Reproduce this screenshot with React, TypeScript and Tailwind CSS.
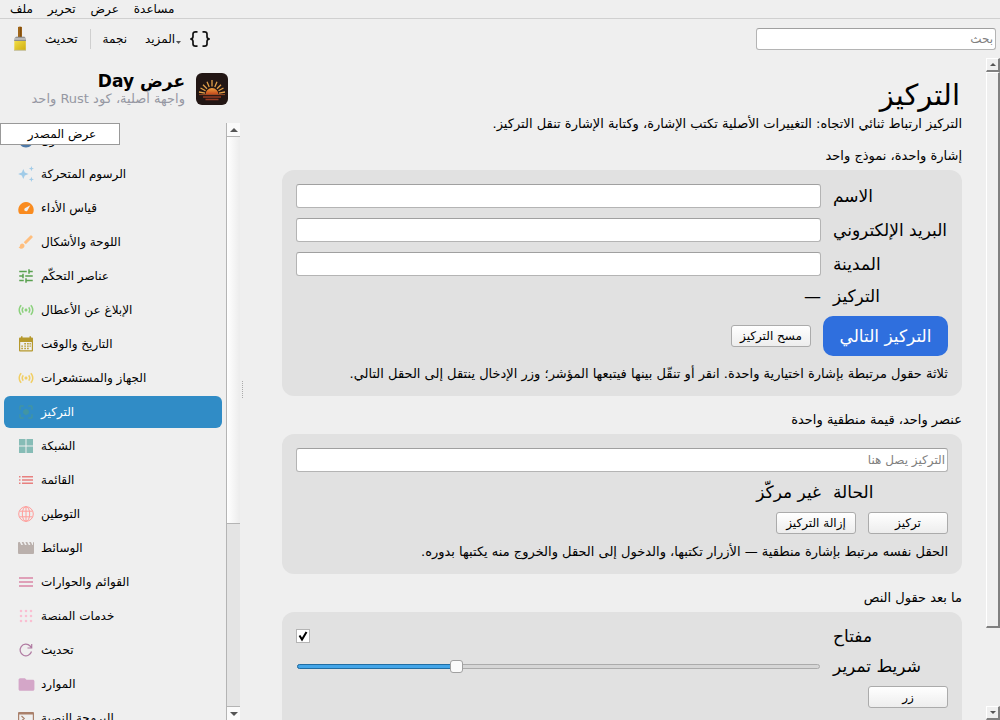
import { useState } from "react";
import type { ReactNode } from "react";
import clsx from "clsx";
import { MdBrush, MdCenterFocusStrong, MdFolder, MdInfo, MdSensors, MdTune } from "react-icons/md";

type Item = { label: string; color: string; icon: ReactNode };

function Glyph({ children }: { children: ReactNode }) {
  return (
    <svg viewBox="0 0 16 16" className="size-4 shrink-0" fill="currentColor" aria-hidden="true">
      {children}
    </svg>
  );
}

const items: Item[] = [
  { label: "حول", color: "text-[#4e79a7]", icon: <MdInfo className="size-[18px] shrink-0" /> },
  {
    label: "الرسوم المتحركة",
    color: "text-[#a0cbe8]",
    icon: (
      <Glyph>
        <path d="M5.300 3l1.500 3.500L10.500 8 6.800 9.500 5.300 13 3.800 9.500.1 8l3.700-1.500zM13.400 0l.7 1.900 1.900.7-1.900.7-.7 1.900-.7-1.900-1.900-.7 1.900-.7zM13.400 10.800l.7 1.900 1.900.7-1.900.7-.7 1.900-.7-1.900-1.900-.7 1.900-.7z" />
      </Glyph>
    ),
  },
  {
    label: "قياس الأداء",
    color: "text-[#f98b1f]",
    icon: (
      <Glyph>
        <path
          fillRule="evenodd"
          d="M8 2a7.900 7.900 0 0 0-7 11.200c.3.6.7.8 1.200.8h11.600c.5 0 .9-.2 1.200-.8A7.900 7.900 0 0 0 8 2zm4.300 3.200L9.600 10.300a1.700 1.700 0 1 1-2.300-2.200z"
        />
      </Glyph>
    ),
  },
  { label: "اللوحة والأشكال", color: "text-[#ffbe7d]", icon: <MdBrush className="size-[18px] shrink-0" /> },
  { label: "عناصر التحكّم", color: "text-[#59a14f]", icon: <MdTune className="size-[18px] shrink-0" /> },
  { label: "الإبلاغ عن الأعطال", color: "text-[#8cd17d]", icon: <MdSensors className="size-[18px] shrink-0" /> },
  {
    label: "التاريخ والوقت",
    color: "text-[#b6992d]",
    icon: (
      <Glyph>
        <path
          fillRule="evenodd"
          d="M3 .2h1.500V1.500h7V.2H13v1.300h1a1 1 0 0 1 1 1V14.500a1 1 0 0 1-1 1H2a1 1 0 0 1-1-1v-12a1 1 0 0 1 1-1h1zM2.200 6v8.300h11.600V6z"
        />
        <path
          d="M6.300 7.700h1.600M9.100 7.700h1.600M11.500 7.700h1.300M3.300 10.100h1.600M6.300 10.100h1.600M9.100 10.100h1.600M11.500 10.100h1.300M3.300 12.500h1.600M6.300 12.500h1.600M9.100 12.500h1.600"
          stroke="currentColor"
          strokeWidth="1.400"
        />
      </Glyph>
    ),
  },
  { label: "الجهاز والمستشعرات", color: "text-[#f1ce63]", icon: <MdSensors className="size-[18px] shrink-0" /> },
  {
    label: "التركيز",
    color: "text-[#499894]/70",
    icon: <MdCenterFocusStrong className="size-[18px] shrink-0" />,
  },
  {
    label: "الشبكة",
    color: "text-[#86bcb6]",
    icon: (
      <Glyph>
        <path d="M1 1h6.500v6.500H1zM8.500 1H15v6.500H8.500zM1 8.500h6.500V15H1zM8.500 8.500H15V15H8.500z" />
      </Glyph>
    ),
  },
  {
    label: "القائمة",
    color: "text-[#e8807f]",
    icon: (
      <Glyph>
        <path d="M1 4h1.500v1.500H1zM4 4h11v1.500H4zM1 7.300h1.500v1.500H1zM4 7.300h11v1.500H4zM1 10.600h1.500v1.500H1zM4 10.600h11v1.500H4z" />
      </Glyph>
    ),
  },
  {
    label: "التوطين",
    color: "text-[#ff9d9a]",
    icon: (
      <Glyph>
        <g fill="none" stroke="currentColor">
          <circle cx="8" cy="8" r="7.300" />
          <ellipse cx="8" cy="8" rx="3.700" ry="7.300" />
          <path d="M8 .7v14.600M1.500 5.200h13M1.500 10.800h13" />
        </g>
      </Glyph>
    ),
  },
  {
    label: "الوسائط",
    color: "text-[#bab0ac]",
    icon: (
      <Glyph>
        <path d="M0 3a1 1 0 0 1 1-1h.8l1.500 3h1.700L3.700 2h1.800L7 5h1.700L7.400 2h1.800l1.500 3h1.700L11.100 2h1.800l1.500 3h.6V2a1 1 0 0 1 1 1v10a1 1 0 0 1-1 1H1a1 1 0 0 1-1-1z" />
      </Glyph>
    ),
  },
  {
    label: "القوائم والحوارات",
    color: "text-[#dfa0b8]",
    icon: (
      <Glyph>
        <path d="M1 3h14v2H1zM1 7h14v2H1zM1 11h14v2H1z" />
      </Glyph>
    ),
  },
  {
    label: "خدمات المنصة",
    color: "text-[#fabfd2]",
    icon: (
      <Glyph>
        <path
          d="M3 3h.01M8 3h.01M13 3h.01M3 8h.01M8 8h.01M13 8h.01M3 13h.01M8 13h.01M13 13h.01"
          stroke="currentColor"
          strokeWidth="2.600"
          strokeLinecap="round"
        />
      </Glyph>
    ),
  },
  {
    label: "تحديث",
    color: "text-[#b07aa1]",
    icon: (
      <Glyph>
        <path
          d="M13.500 9.500A5.800 5.800 0 1 1 12.100 4l1.400 1.500M13.700 2v4H9.500"
          fill="none"
          stroke="currentColor"
          strokeWidth="1.200"
        />
      </Glyph>
    ),
  },
  { label: "الموارد", color: "text-[#d4a6c8]", icon: <MdFolder className="size-[19px] shrink-0" /> },
  {
    label: "البرمجة النصية",
    color: "text-[#a9806b]",
    icon: (
      <Glyph>
        <path
          fillRule="evenodd"
          d="M1 2h14a1 1 0 0 1 1 1v11a1 1 0 0 1-1 1H1a1 1 0 0 1-1-1V3a1 1 0 0 1 1-1zm.2 2.500v9.200h13.600V4.500z"
        />
        <path d="M3.500 6l2.700 2.500L3.500 11M8 12h4" fill="none" stroke="currentColor" strokeWidth="1.200" />
      </Glyph>
    ),
  },
];

const menus = ["ملف", "تحرير", "عرض", "مساعدة"];

const inputClass =
  "w-full min-w-0 rounded-[3px] border border-[#b4b4b4] border-t-[#a0a0a0] bg-white px-0.5 text-xs text-black outline-none placeholder:text-[#808080]";

function Arrow({ up, className = "h-1 w-2" }: { up?: boolean; className?: string }) {
  return (
    <svg viewBox="0 0 8 4" className={className} fill="currentColor" preserveAspectRatio="none" aria-hidden="true">
      <path d={up ? "M0 4L4 0l4 4z" : "M0 0h8L4 4z"} />
    </svg>
  );
}

function BrushIcon() {
  return (
    <svg viewBox="0 0 16 26" className="h-[26px] w-4" aria-hidden="true">
      <defs>
        <linearGradient id="bristle" x1="0" y1="0" x2="1" y2="1">
          <stop offset="0" stopColor="#f4e04a" />
          <stop offset="1" stopColor="#cfae10" />
        </linearGradient>
        <linearGradient id="ferrule" x1="0" y1="0" x2="0" y2="1">
          <stop offset="0" stopColor="#777" />
          <stop offset="0.500" stopColor="#ccc" />
          <stop offset="1" stopColor="#777" />
        </linearGradient>
      </defs>
      <path d="M6 1Q8-.2 10 1v10.500H6z" fill="#a0661a" />
      <path d="M8.700 1V11" stroke="#7d4b0c" />
      <path d="M2.300 14v10h11.500V14z" fill="url(#bristle)" />
      <path d="M4 10.800h8.500L14 12.500V15H2.200v-2.500z" fill="url(#ferrule)" />
      <path d="M2 24.300h12" stroke="#c3bd94" />
    </svg>
  );
}

function Logo() {
  return (
    <svg viewBox="0 0 32 32" className="size-8 shrink-0" aria-hidden="true">
      <defs>
        <linearGradient id="sun" x1="0" y1="0" x2="0" y2="1">
          <stop offset="0" stopColor="#f0a03c" />
          <stop offset="1" stopColor="#c4461c" />
        </linearGradient>
      </defs>
      <rect width="32" height="32" rx="6" fill="#221614" />
      <path d="M9.500 21.500a6.500 6.500 0 0 1 13 0z" fill="url(#sun)" />
      <path
        d="M16 7V13.500M11 8.700l2.200 5.300M21 8.700L18.800 14M7 11.700l4 4M25 11.700l-4 4M4.500 15l5 2.700M27.500 15l-5 2.700M3 19l6 1.200M29 19l-6 1.200"
        stroke="#e3a14a"
        strokeWidth="1.300"
      />
      <path d="M3 21.600h26" stroke="#b5592c" strokeWidth=".8" />
      <path d="M7 24h18M9.500 26.500h13" stroke="#963b22" strokeWidth="1.500" />
    </svg>
  );
}

function PushButton({ children }: { children: ReactNode }) {
  return (
    <button
      type="button"
      className="h-[22px] min-w-20 rounded-[3px] border border-[#ababab] bg-linear-to-b from-white to-[#ededed] px-2 text-xs leading-5 whitespace-nowrap"
    >
      {children}
    </button>
  );
}

function Section({ title, children }: { title: string; children: ReactNode }) {
  return (
    <section className="mt-4">
      <h2 className="text-[13px] leading-4">{title}</h2>
      <div className="mt-1.5 flex flex-col gap-2.5 rounded-xl bg-[#e1e1e1] p-3.5">{children}</div>
    </section>
  );
}

function Row({ label, htmlFor, children }: { label: string; htmlFor?: string; children: ReactNode }) {
  return (
    <div className="flex items-center gap-3">
      <label htmlFor={htmlFor} dir="ltr" className="w-[115px] shrink-0 text-[17px] leading-5 whitespace-nowrap">
        {label}
      </label>
      <div className="flex min-w-0 flex-1">{children}</div>
    </div>
  );
}

function Sidebar() {
  const [selected, setSelected] = useState("التركيز");

  return (
    <aside className="flex w-60 shrink-0 flex-col">
      <div className="flex h-[65px] shrink-0 items-center justify-end gap-[11px] pr-3 pb-1">
        <div dir="rtl">
          <p className="text-[17px] leading-5 font-bold">عرض Day</p>
          <p className="text-[13px] leading-4 text-[#9698a3]">واجهة أصلية، كود Rust واحد</p>
        </div>
        <Logo />
      </div>
      <div className="relative flex min-h-0 flex-1">
        <nav className="flex flex-1 flex-col gap-0.5 overflow-hidden px-1 pt-px">
          {items.map((item) => (
            <button
              key={item.label}
              type="button"
              onClick={() => setSelected(item.label)}
              className={clsx(
                "flex h-8 shrink-0 items-center gap-1.5 rounded-md pl-[13px] text-xs",
                selected === item.label && "bg-[#308cc6] text-white"
              )}
            >
              <span className={clsx("flex w-[18px] justify-center", item.color)}>{item.icon}</span>
              {item.label}
            </button>
          ))}
        </nav>
        <div className="flex w-3.5 shrink-0 flex-col border-l border-[#b4b4b4] bg-[#e4e4e4]">
          <div className="flex h-3.5 items-center justify-center border-b border-[#b4b4b4] bg-[#fafafa] text-[#555]">
            <Arrow up />
          </div>
          <div className="h-[387px] border-b border-[#b4b4b4] bg-linear-to-r from-white to-[#ececec]" />
          <div className="mt-auto flex h-3.5 items-center justify-center border-t border-[#b4b4b4] bg-[#fafafa] text-[#555]">
            <Arrow />
          </div>
        </div>
        <button
          type="button"
          className="absolute top-0 left-0 h-[22px] w-[120px] border border-[#999] bg-white pl-1 text-xs"
        >
          عرض المصدر
        </button>
      </div>
    </aside>
  );
}

const bevel = "border-t border-r-2 border-b-2 border-l border-t-white border-r-[#808080] border-b-[#808080] border-l-white";

function MainScrollbar() {
  return (
    <div className="flex w-3.5 shrink-0 flex-col">
      <div className={clsx("flex h-3.5 items-center justify-center text-[#555]", bevel)}>
        <Arrow up className="h-[3px] w-1.5" />
      </div>
      <div className={clsx("h-[556px]", bevel)} />
      <div className={clsx("mt-auto flex h-3.5 items-center justify-center text-[#555]", bevel)}>
        <Arrow className="h-[3px] w-1.5" />
      </div>
    </div>
  );
}

function FocusPage() {
  const [level, setLevel] = useState(30);
  const [enabled, setEnabled] = useState(true);

  return (
    <main dir="rtl" className="min-w-0 flex-1 overflow-hidden pt-5 pr-6 pl-[38px]">
      <h1 className="pr-0.5 text-[29px] leading-[34px]">التركيز</h1>
      <p className="mt-1 text-[13px] leading-4">
        التركيز ارتباط ثنائي الاتجاه: التغييرات الأصلية تكتب الإشارة، وكتابة الإشارة تنقل التركيز.
      </p>

      <Section title="إشارة واحدة، نموذج واحد">
        <Row label="الاسم" htmlFor="name">
          <input id="name" className={clsx(inputClass, "h-6")} />
        </Row>
        <Row label="البريد الإلكتروني" htmlFor="email">
          <input id="email" type="email" className={clsx(inputClass, "h-6")} />
        </Row>
        <Row label="المدينة" htmlFor="city">
          <input id="city" className={clsx(inputClass, "h-6")} />
        </Row>
        <Row label="التركيز">
          <span className="text-[17px] leading-5">—</span>
        </Row>
        <div className="flex items-center gap-3">
          <button type="button" className="h-10 min-w-[125px] rounded-[10px] bg-[#2f6fde] px-4 text-[17px] text-white">
            التركيز التالي
          </button>
          <PushButton>مسح التركيز</PushButton>
        </div>
        <p className="text-[13px] leading-4">
          ثلاثة حقول مرتبطة بإشارة اختيارية واحدة. انقر أو تنقّل بينها فيتبعها المؤشر؛ وزر الإدخال ينتقل إلى الحقل التالي.
        </p>
      </Section>

      <Section title="عنصر واحد، قيمة منطقية واحدة">
        <input aria-label="التركيز يصل هنا" placeholder="التركيز يصل هنا" className={clsx(inputClass, "h-6")} />
        <Row label="الحالة">
          <span className="text-[17px] leading-5">غير مركّز</span>
        </Row>
        <div className="flex gap-3">
          <PushButton>تركيز</PushButton>
          <PushButton>إزالة التركيز</PushButton>
        </div>
        <p className="text-[13px] leading-4">
          الحقل نفسه مرتبط بإشارة منطقية — الأزرار تكتبها، والدخول إلى الحقل والخروج منه يكتبها بدوره.
        </p>
      </Section>

      <Section title="ما بعد حقول النص">
        <Row label="مفتاح" htmlFor="toggle">
          <div className="relative mr-auto size-3.5">
            <input
              id="toggle"
              type="checkbox"
              checked={enabled}
              onChange={(e) => setEnabled(e.target.checked)}
              className="block size-3.5 appearance-none border border-[#b4b4b4] bg-white"
            />
            {enabled && (
              <svg viewBox="0 0 14 14" className="pointer-events-none absolute inset-0" aria-hidden="true">
                <path d="M3.500 6.500l2.500 4L10.500 3" fill="none" stroke="#000" strokeWidth="2" />
              </svg>
            )}
          </div>
        </Row>
        <Row label="شريط تمرير" htmlFor="level">
          <div dir="ltr" className="relative mx-px flex h-[15px] flex-1 items-center">
            <div className="h-[5px] w-full rounded-sm border border-[#ababab] bg-[#d6d6d6]">
              <div
                className="-mx-px -mt-px h-[5px] rounded-sm border border-[#206da3] bg-[#43a5e8]"
                style={{ width: `${level}%` }}
              />
            </div>
            <input
              id="level"
              type="range"
              value={level}
              onChange={(e) => setLevel(Number(e.target.value))}
              className="absolute inset-0 w-full appearance-none bg-transparent [&::-webkit-slider-thumb]:size-[13px] [&::-webkit-slider-thumb]:appearance-none [&::-webkit-slider-thumb]:rounded-[3px] [&::-webkit-slider-thumb]:border [&::-webkit-slider-thumb]:border-[#a0a0a0] [&::-webkit-slider-thumb]:bg-[#fafafa]"
            />
          </div>
        </Row>
        <div className="flex pb-5">
          <PushButton>زر</PushButton>
        </div>
      </Section>
    </main>
  );
}

export default function App() {
  return (
    <div className="flex h-screen flex-col overflow-hidden bg-[#efefef] font-['DejaVu_Sans',sans-serif] text-xs text-black">
      <div className="flex h-[19px] shrink-0 items-center gap-[15px] border-b border-[#d0d0d0] pl-2.5">
        {menus.map((menu) => (
          <button key={menu} type="button" className="leading-4">
            {menu}
          </button>
        ))}
      </div>

      <div className="flex h-[39px] shrink-0 items-center pr-1 pl-3">
        <button type="button" aria-label="فرشاة">
          <BrushIcon />
        </button>
        <button type="button" className="ml-[17px]">
          تحديث
        </button>
        <div className="mx-3 h-5 w-px bg-[#cfcfcf]" />
        <button type="button">نجمة</button>
        <button type="button" className="ml-[18px] flex items-center">
          المزيد
          <Arrow className="mt-2 ml-px h-[3px] w-[5px] text-[#555]" />
        </button>
        <button type="button" aria-label="المصدر" className="ml-2">
          <svg viewBox="0 0 22 18" className="h-[18px] w-[22px]" fill="none" stroke="#111" strokeWidth="1.700" aria-hidden="true">
            <path d="M8.500 1.800H6.500Q4 1.800 4 4v2.500Q4 9 1.200 9 4 9 4 11.500V14q0 2.200 2.500 2.200h2M13.500 1.800h2Q18 1.800 18 4v2.500Q18 9 20.800 9 18 9 18 11.500V14q0 2.200-2.500 2.200h-2" />
          </svg>
        </button>
        <input
          type="search"
          dir="rtl"
          aria-label="بحث"
          placeholder="بحث"
          className={clsx(inputClass, "ml-auto h-[22px] max-w-60")}
        />
      </div>

      <div className="flex min-h-0 flex-1">
        <Sidebar />
        <div className="flex w-1 shrink-0 items-center justify-center">
          <div className="h-[17px] border-l border-dotted border-[#aaa]" />
        </div>
        <FocusPage />
        <MainScrollbar />
      </div>
    </div>
  );
}
